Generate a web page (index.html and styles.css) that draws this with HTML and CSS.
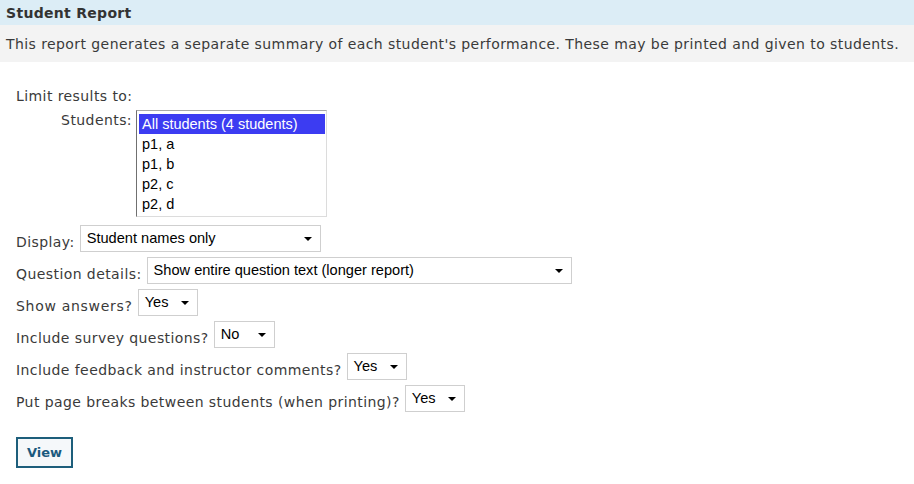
FILE: index.html
```html
<!DOCTYPE html>
<html>
<head>
<meta charset="utf-8">
<link rel="stylesheet" href="styles.css">
</head>
<body>
<div class="header"><h1 class="title">Student Report</h1></div>
<div class="desc">This report generates a separate summary of each student's performance. These may be printed and given to students.</div>
<div class="form">
  <div class="limit">Limit results to:</div>
  <div class="students-row">
    <div class="students-label">Students:</div>
    <div class="listbox">
      <div class="opt selected">All students (4 students)</div>
      <div class="opt">p1, a</div>
      <div class="opt">p1, b</div>
      <div class="opt">p2, c</div>
      <div class="opt">p2, d</div>
    </div>
  </div>
  <div class="row first">
    <span class="label">Display:</span>
    <div class="select w-display"><span>Student names only</span><span class="arrow"></span></div>
  </div>
  <div class="row">
    <span class="label">Question details:</span>
    <div class="select w-question"><span>Show entire question text (longer report)</span><span class="arrow"></span></div>
  </div>
  <div class="row">
    <span class="label wide">Show answers?</span>
    <div class="select w-small"><span>Yes</span><span class="arrow"></span></div>
  </div>
  <div class="row">
    <span class="label">Include survey questions?</span>
    <div class="select w-small2"><span>No</span><span class="arrow"></span></div>
  </div>
  <div class="row">
    <span class="label">Include feedback and instructor comments?</span>
    <div class="select w-small"><span>Yes</span><span class="arrow"></span></div>
  </div>
  <div class="row">
    <span class="label">Put page breaks between students (when printing)?</span>
    <div class="select w-small"><span>Yes</span><span class="arrow"></span></div>
  </div>
  <div class="actions"><button class="btn">View</button></div>
</div>
</body>
</html>
```
FILE: styles.css
```css
html, body {
  margin: 0;
  padding: 0;
  background: #fff;
}
body {
  font-family: "DejaVu Sans", Verdana, sans-serif;
  font-size: 14px;
  color: #3a3a3a;
}
.header {
  background: #dcedf6;
  height: 25px;
  padding: 0 6px;
  display: flex;
  align-items: center;
}
.title {
  margin: 0;
  font-size: 14px;
  font-weight: bold;
  color: #333;
  letter-spacing: 0.3px;
}
.desc {
  background: #f3f3f3;
  height: 37px;
  padding: 0 6px;
  display: flex;
  align-items: center;
  color: #3a3a3a;
  letter-spacing: 0.42px;
  white-space: nowrap;
}
.form {
  padding: 24px 16px 0 16px;
}
.limit {
  height: 20px;
  line-height: 20px;
  letter-spacing: 0.42px;
}
.students-row {
  display: flex;
  align-items: flex-start;
  margin-top: 4px;
}
.students-label {
  width: 116px;
  text-align: right;
  line-height: 20px;
  letter-spacing: 0.42px;
}
.listbox {
  margin-left: 4px;
  width: 186px;
  height: 102px;
  border: 1px solid #a9a9a9;
  border-right-color: #dcdcdc;
  border-bottom-color: #dcdcdc;
  border-left-color: #707070;
  padding: 3px 1px 0 2px;
  box-sizing: content-box;
  overflow: hidden;
  font-family: "Liberation Sans", Arial, sans-serif;
  font-size: 14.5px;
  color: #000;
}
.opt {
  height: 20px;
  line-height: 20px;
  padding-left: 3px;
}
.opt.selected {
  background: #3c3cf2;
  color: #fff;
}
.row {
  display: flex;
  align-items: center;
  margin-top: 5px;
}
.row.first {
  margin-top: 8px;
}
.label {
  letter-spacing: 0.42px;
  padding-top: 6px;
  margin-right: 5px;
  white-space: nowrap;
}
.label.wide {
  letter-spacing: 0.7px;
}
.select {
  height: 25px;
  border: 1px solid #cfcfcf;
  background: #fff;
  box-sizing: content-box;
  display: flex;
  align-items: flex-start;
  justify-content: space-between;
  padding: 0 6px 0 6px;
  font-family: "Liberation Sans", Arial, sans-serif;
  font-size: 14.6px;
  color: #000;
  line-height: 25px;
}
.select span:first-child {
  line-height: 24px;
}
.arrow {
  width: 0;
  height: 0;
  border-left: 4px solid transparent;
  border-right: 4px solid transparent;
  border-top: 4px solid #000;
  margin-top: 11px;
  margin-right: 2px;
}
.w-display { width: 227px; }
.w-question { width: 411px; }
.w-small { width: 46px; }
.w-small2 { width: 47px; }
.actions {
  margin-top: 25px;
}
.btn {
  font-family: "DejaVu Sans", Verdana, sans-serif;
  font-size: 13px;
  font-weight: bold;
  color: #1b5a7e;
  background: #f5f8fa;
  border: 2px solid #1d5e7b;
  width: 57px;
  height: 31px;
  padding: 0;
  border-radius: 0;
}
```
